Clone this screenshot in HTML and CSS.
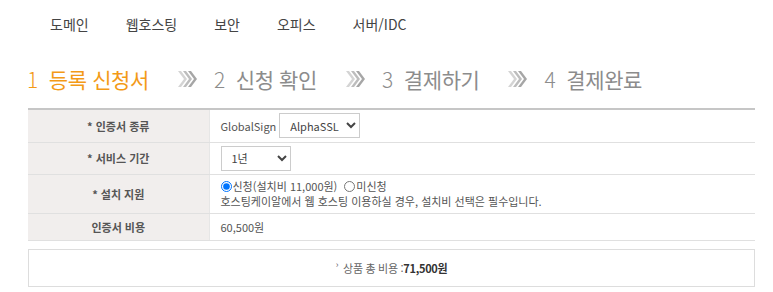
FILE: index.html
```html
<!DOCTYPE html>
<html lang="ko">
<head>
    <meta charset="UTF-8">
    <title>SSL 인증서 신청</title>
    <link rel="stylesheet" href="styles.css">
</head>
<body>
    <div class="gnb">
        <a href="#">도메인</a>
        <a href="#">웹호스팅</a>
        <a href="#">보안</a>
        <a href="#">오피스</a>
        <a href="#">서버/IDC</a>
    </div>

    <div class="steps">
        <div class="step on"><span class="num">1</span>등록 신청서</div>
        <svg class="arrow" width="20" height="18" viewBox="0 0 20 18">
            <path d="M1 1l6 8-6 8h3l6-8-6-8z" fill="#d4d4d4"/>
            <path d="M6 1l6 8-6 8h3l6-8-6-8z" fill="#bdbdbd"/>
            <path d="M11 1l6 8-6 8h3l6-8-6-8z" fill="#a6a6a6"/>
        </svg>
        <div class="step"><span class="num">2</span>신청 확인</div>
        <svg class="arrow" width="20" height="18" viewBox="0 0 20 18">
            <path d="M1 1l6 8-6 8h3l6-8-6-8z" fill="#d4d4d4"/>
            <path d="M6 1l6 8-6 8h3l6-8-6-8z" fill="#bdbdbd"/>
            <path d="M11 1l6 8-6 8h3l6-8-6-8z" fill="#a6a6a6"/>
        </svg>
        <div class="step"><span class="num">3</span>결제하기</div>
        <svg class="arrow" width="20" height="18" viewBox="0 0 20 18">
            <path d="M1 1l6 8-6 8h3l6-8-6-8z" fill="#d4d4d4"/>
            <path d="M6 1l6 8-6 8h3l6-8-6-8z" fill="#bdbdbd"/>
            <path d="M11 1l6 8-6 8h3l6-8-6-8z" fill="#a6a6a6"/>
        </svg>
        <div class="step"><span class="num">4</span>결제완료</div>
    </div>

    <table class="form-table">
        <tr class="r1">
            <th>* 인증서 종류</th>
            <td>
                <div class="inline">
                    <span>GlobalSign</span>
                    <select class="sel-product">
                        <option>AlphaSSL</option>
                    </select>
                </div>
            </td>
        </tr>
        <tr class="r2">
            <th>* 서비스 기간</th>
            <td>
                <select class="sel-period">
                    <option>1년</option>
                </select>
            </td>
        </tr>
        <tr class="r3">
            <th>* 설치 지원</th>
            <td>
                <div class="radios">
                    <label><input type="radio" name="install" checked>신청(설치비 11,000원)</label>
                    <label><input type="radio" name="install">미신청</label>
                </div>
                <p class="help">호스팅케이알에서 웹 호스팅 이용하실 경우, 설치비 선택은 필수입니다.</p>
            </td>
        </tr>
        <tr class="r4">
            <th>인증서 비용</th>
            <td>60,500원</td>
        </tr>
    </table>

    <div class="total">
        <span class="bullet">›</span>
        <span>상품 총 비용 :</span><strong>71,500원</strong>
    </div>
</body>
</html>
```

FILE: styles.css
```css
* {
    margin: 0;
    padding: 0;
    box-sizing: border-box;
}

body {
    background-color: #fff;
    color: #555;
    font-family: 'Noto Sans CJK KR', 'Noto Sans', sans-serif;
    width: 773px;
}

.gnb {
    display: flex;
    gap: 37px;
    padding: 14px 0 0 50px;
    height: 50px;
}

.gnb a {
    font-size: 14px;
    line-height: 20px;
    color: #444;
    text-decoration: none;
}

.steps {
    display: flex;
    align-items: center;
    padding-left: 27px;
    height: 58px;
}

.step {
    font-size: 21px;
    color: #8c8c8c;
    letter-spacing: -0.4px;
    line-height: 30px;
    display: flex;
    align-items: center;
}

.step .num {
    margin-right: 11px;
    font-weight: 300;
}

.step.on {
    color: #f39a17;
}

.arrow {
    margin: 0 17px 0 28px;
}

.form-table {
    margin-left: 28px;
    width: 727px;
    border-collapse: collapse;
    border-top: 2px solid #c6c6c6;
    font-size: 11px;
}

.form-table th,
.form-table td {
    border-bottom: 1px solid #e0e0e0;
}

.form-table th {
    width: 181px;
    background-color: #f1eeed;
    color: #555;
    font-weight: bold;
    text-align: center;
    border-right: 1px solid #e6e6e6;
}

.form-table td {
    padding-left: 11px;
    color: #555;
}

.r1 { height: 33px; }
.r2 { height: 32px; }
.r3 { height: 39px; }
.r4 { height: 27px; }

.inline {
    display: flex;
    align-items: center;
    gap: 3px;
}

select {
    font-family: 'Noto Sans CJK KR', 'Noto Sans', sans-serif;
    font-size: 11px;
    color: #444;
    border: 1px solid #ccc;
    background-color: #fff;
    padding-left: 6px;
    height: 25px;
}

.sel-product {
    width: 81px;
}

.sel-period {
    width: 70px;
}

.radios {
    display: flex;
    gap: 7px;
    line-height: 15px;
}

.radios label {
    display: flex;
    align-items: center;
}

.radios input {
    width: 11px;
    height: 11px;
    margin: 0 1px 0 0;
}

.help {
    line-height: 15px;
}

.total {
    margin: 8px 0 0 28px;
    width: 727px;
    height: 38px;
    border: 1px solid #ddd;
    display: flex;
    align-items: center;
    justify-content: center;
    font-size: 11px;
    color: #666;
    letter-spacing: -0.3px;
}

.total .bullet {
    font-size: 9px;
    margin-right: 5px;
    position: relative;
    top: -3px;
}

.total strong {
    color: #333;
}
```
